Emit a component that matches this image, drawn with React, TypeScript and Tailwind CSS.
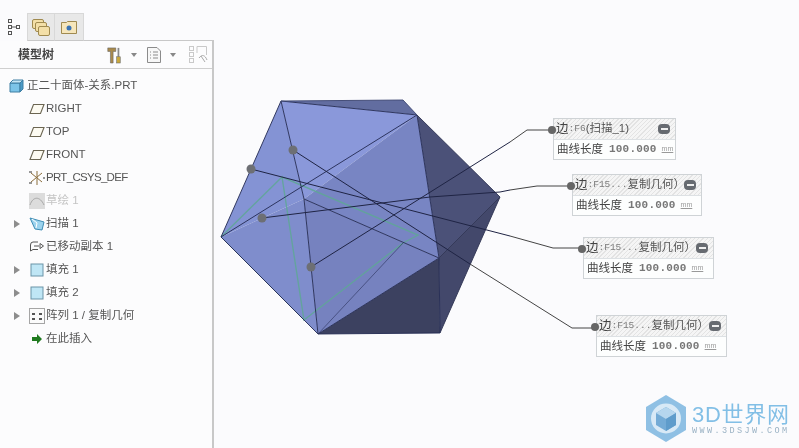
import React from "react";

const cjk = "font-['Liberation_Sans','Noto_Sans_CJK_SC',sans-serif]";

function Plane() {
  return (
    <svg width="16" height="12" viewBox="0 0 16 12">
      <path d="M4.5 1.5H15L11.5 10.5H1Z" fill="#fdfbf2" stroke="#6b6552" strokeWidth="1.1" />
    </svg>
  );
}

function Fill() {
  return (
    <svg width="16" height="16" viewBox="0 0 16 16">
      <rect x="2" y="2" width="12" height="12" fill="#bfe6f5" stroke="#6b94a8" />
    </svg>
  );
}

function Arrow() {
  return <span className="w-0 h-0 border-y-[4px] border-y-transparent border-l-[6px] border-l-[#8d8d8d]" />;
}

function Row({ icon, label, arrow, muted, tight }: { icon: React.ReactNode; label: string; arrow?: boolean; muted?: boolean; tight?: boolean }) {
  return (
    <div className="h-[23px] flex items-center">
      <div className="w-[27px] pl-[14px] flex items-center">{arrow && <Arrow />}</div>
      <div className="w-[19px] flex items-center justify-center">{icon}</div>
      <span className={`${muted ? "text-[#c4c4c4]" : "text-[#555555]"} ${tight ? "tracking-[-0.7px]" : ""} whitespace-nowrap`}>{label}</span>
    </div>
  );
}

function Callout({ pos, mono, name, widthCls }: { pos: string; mono: string; name: string; widthCls: string }) {
  return (
    <div className={`absolute ${pos} ${widthCls} border border-[#cfd3d6] bg-[#fdfefe] ${cjk}`}>
      <div className="relative h-[21px] flex items-center pl-[2px] border-b border-[#dde1e4] bg-[repeating-linear-gradient(135deg,#e3e3e3_0,#e3e3e3_1px,#f5f5f5_1px,#f5f5f5_3px)]">
        <span className="text-[12.5px] text-[#444444] whitespace-nowrap">边</span>
        <span className="text-[9.5px] text-[#7a7a7a] font-['Liberation_Mono',monospace] whitespace-nowrap">{mono}</span>
        <span className="text-[11.5px] text-[#555555] whitespace-nowrap">{name}</span>
        <span className="absolute right-[5px] top-[5px] w-[12px] h-[10px] rounded-[4px] bg-[#666a70] flex items-center justify-center">
          <span className="w-[7px] h-[2px] bg-[#eeeeee]" />
        </span>
        <span className="absolute -left-[6px] top-[7px] w-[8px] h-[8px] rounded-full bg-[#666666]" />
      </div>
      <div className="h-[19px] flex items-center pl-[3px] text-[11.5px] text-[#444444]">
        <span className="w-[47px] whitespace-nowrap">曲线长度</span>
        <span className="ml-[5px] text-[11px] font-bold text-[#777777] tracking-[0.2px] font-['Liberation_Mono',monospace] whitespace-nowrap">100.000</span>
        <span className="ml-[5px] text-[7px] text-[#999999] underline">mm</span>
      </div>
    </div>
  );
}

function Model() {
  return (
    <svg className="absolute left-0 top-0" width="799" height="448" viewBox="0 0 799 448">
      <polygon points="281,101 403,100 417,115" fill="#626da0" />
      <polygon points="417,115 500,197 439,258" fill="#4b5178" />
      <polygon points="500,197 439,258 440,333" fill="#43486b" />
      <polygon points="439,258 440,333 318,334" fill="#3c4160" />
      <polygon points="281,101 417,115 304,199" fill="#8a98da" />
      <polygon points="281,101 304,199 221,237" fill="#8493d4" />
      <polygon points="417,115 439,258 304,199" fill="#7885c3" />
      <polygon points="304,199 439,258 318,334" fill="#7682bf" />
      <polygon points="221,237 304,199 318,334" fill="#7f8dcc" />

      <g fill="none" stroke="#5fa796" strokeWidth="1.4" opacity="0.85">
        <path d="M221 237L282 177L304 320L403 243L418 235L282 177" />
        <path d="M221 237L304 320" strokeWidth="1" />
      </g>

      <g fill="none" stroke="#232a52" strokeWidth="1" opacity="0.9">
        <path d="M281 101L417 115L439 258L304 199L281 101" />
        <path d="M417 115L221 237" />
        <path d="M281 101L221 237L318 334L304 199" />
        <path d="M439 258L318 334L440 333L439 258" />
        <path d="M417 115L500 197L439 258" stroke="#2f3453" />
        <path d="M500 197L440 333" stroke="#2f3453" />
        <path d="M281 101L403 100L417 115" stroke="#3b4470" />
        <path d="M318 334L403 243" opacity="0.6" />
      </g>

      <g fill="none" stroke="#1f2444" strokeWidth="1">
        <path d="M311 267L510 142" />
        <path d="M262 218L430 197L500 192L510 190" />
        <path d="M251 169L510 236" />
        <path d="M293 150L470 264" />
      </g>
      <g fill="none" stroke="#444444" strokeWidth="1">
        <path d="M510 142L527 130L553 130" />
        <path d="M510 190L537 186L572 186" />
        <path d="M510 236L553 248L583 248" />
        <path d="M470 264L572 328L596 328" />
      </g>
      <g fill="#6d6f74">
        <circle cx="293" cy="150" r="4.5" />
        <circle cx="251" cy="169" r="4.5" />
        <circle cx="262" cy="218" r="4.5" />
        <circle cx="311" cy="267" r="4.5" />
      </g>
    </svg>
  );
}

function Logo() {
  return (
    <div className="absolute left-[645px] top-[395px] flex items-start">
      <svg width="42" height="47" viewBox="0 0 42 47">
        <polygon points="21,0 41,12 41,35 21,47 1,35 1,12" fill="#8fc0e4" />
        <circle cx="21" cy="23.5" r="15" fill="#d8e9f6" />
        <polygon points="21,12 31,18 31,30 21,36 11,30 11,18" fill="#74abd6" />
        <polygon points="21,12 31,18 21,24 11,18" fill="#b6d6ee" />
        <polygon points="21,24 31,18 31,30 21,36" fill="#5f9ccb" />
      </svg>
      <div className="ml-[5px] mt-[8px] flex flex-col">
        <span className={`text-[22px] leading-[24px] tracking-[0.7px] text-[#82bfe6] whitespace-nowrap ${cjk}`}>3D世界网</span>
        <span className="text-[8.5px] leading-[9px] tracking-[2.4px] text-[#9ab2c4] font-['Liberation_Mono',monospace] whitespace-nowrap">WWW.3DSJW.COM</span>
      </div>
    </div>
  );
}

export default function App() {
  return (
    <div className={`relative w-[799px] h-[448px] overflow-hidden bg-[#fbfbfd] flex blur-[0.45px] ${cjk}`}>
      <div className="w-[214px] h-full flex flex-col">
        <div className="h-[13px]" />
        <div className="h-[28px] flex items-end">
          <div className="w-[27px] h-[28px] flex items-center justify-center">
            <svg width="14" height="18" viewBox="0 0 14 18" fill="none" stroke="#555555">
              <rect x="1.5" y="1.5" width="3" height="3" />
              <rect x="1.5" y="7.5" width="3" height="3" />
              <rect x="1.5" y="13.5" width="3" height="3" />
              <rect x="9.5" y="7.5" width="3" height="3" />
              <path d="M5 9H9" />
            </svg>
          </div>
          <div className="w-[28px] h-[28px] bg-[#e8e8e8] border border-[#d8d8d8] border-b-[#c8c8c8] flex items-center justify-center">
            <svg width="20" height="20" viewBox="0 0 20 20" stroke="#a08a50" fill="#f3dfa8">
              <rect x="1.5" y="2.5" width="11" height="9" rx="1.5" />
              <rect x="4.5" y="5.5" width="11" height="9" rx="1.5" />
              <rect x="7.5" y="9.5" width="11" height="9" rx="1.5" />
            </svg>
          </div>
          <div className="w-[29px] h-[28px] bg-[#e8e8e8] border border-l-0 border-[#d8d8d8] border-b-[#c8c8c8] flex items-center justify-center">
            <svg width="18" height="16" viewBox="0 0 18 16" stroke="#a08a50" fill="#f6e6bb">
              <path d="M1.5 3.5V14.5H16.5V2.5H7.5L6.5 3.5Z" />
              <circle cx="9" cy="9" r="2.5" fill="#3b74b5" stroke="none" />
            </svg>
          </div>
          <div className="flex-1 h-[28px] border-b border-[#c8c8c8]" />
        </div>
        <div className="flex-1 flex flex-col border-r-[2px] border-[#c8c8c8] bg-[#fcfcfd]">
          <div className="h-[28px] flex items-center border-b border-[#cfcfcf] relative">
            <span className="ml-[18px] text-[12px] font-bold text-[#444444] whitespace-nowrap">模型树</span>
            <div className="ml-auto flex items-center">
              <svg width="16" height="20" viewBox="0 0 18 20">
                <path d="M2 2H11V6H8V19H5V6H2Z" fill="#a98a4c" stroke="#5f5f5f" strokeWidth="0.6" />
                <rect x="13" y="2" width="2" height="10" fill="#888888" />
                <rect x="12" y="12" width="4" height="7" fill="#c9a83c" stroke="#5f5f5f" strokeWidth="0.6" />
              </svg>
              <span className="ml-[9px] w-0 h-0 border-x-[3.5px] border-x-transparent border-t-[4px] border-t-[#888888]" />
              <svg className="ml-[9px]" width="16" height="18" viewBox="0 0 16 18" fill="#f7f7f7" stroke="#8b8b8b">
                <path d="M1.5 1.5H11L14.5 5V16.5H1.5Z" />
                <path d="M4 6H5M7 6H12M4 9H5M7 9H12M4 12H5M7 12H12" fill="none" />
              </svg>
              <span className="ml-[8px] w-0 h-0 border-x-[3.5px] border-x-transparent border-t-[4px] border-t-[#888888]" />
              <svg className="ml-[12px] mr-[4px]" width="20" height="19" viewBox="0 0 20 19" fill="none" stroke="#c9c9c9">
                <rect x="1.5" y="1.5" width="4" height="4" />
                <rect x="1.5" y="7.5" width="4" height="4" />
                <rect x="1.5" y="13.5" width="4" height="4" />
                <path d="M9 1.5H18.5V10M9 1.5V8" />
                <path d="M11 13C14 9 17 10 19 15M13 11L17 17" stroke="#a9a9a9" />
              </svg>
            </div>
          </div>
          <div className="pt-[6px] text-[11.5px]">
            <div className="h-[22px] flex items-center pl-[9px]">
              <svg width="16" height="14" viewBox="0 0 16 14" className="mr-[2px]">
                <path d="M1 4H11V13H1Z" fill="#7cc4e8" stroke="#3f7ea3" />
                <path d="M1 4L4 1H14L11 4Z" fill="#c4e6f6" stroke="#3f7ea3" />
                <path d="M11 4L14 1V10L11 13Z" fill="#4b9ac6" stroke="#3f7ea3" />
              </svg>
              <span className="text-[#555555] whitespace-nowrap">正二十面体-关系.PRT</span>
            </div>
            <Row icon={<Plane />} label="RIGHT" />
            <Row icon={<Plane />} label="TOP" />
            <Row icon={<Plane />} label="FRONT" />
            <Row
              tight
              label="PRT_CSYS_DEF"
              icon={
                <svg width="17" height="16" viewBox="0 0 17 16" fill="none" stroke="#8a6d3b">
                  <path d="M9 1V15M3 3L14 12M3 12L14 3" />
                  <path d="M1 2H4M1 13H4M15 8H17" stroke="#333333" />
                </svg>
              }
            />
            <Row
              muted
              label="草绘 1"
              icon={
                <svg width="16" height="16" viewBox="0 0 16 16" fill="none">
                  <rect width="16" height="16" fill="#dcdcdc" />
                  <path d="M1 12C4 3 11 3 15 12" stroke="#a8a8a8" />
                </svg>
              }
            />
            <Row
              arrow
              label="扫描 1"
              icon={
                <svg width="16" height="15" viewBox="0 0 16 15">
                  <path d="M1 2L15 6L13 14L6 13Z" fill="#9bd3ee" stroke="#3f8db5" />
                  <path d="M3 3L8 7L7 12" fill="none" stroke="#ffffff" />
                </svg>
              }
            />
            <Row
              label="已移动副本 1"
              icon={
                <svg width="16" height="14" viewBox="0 0 16 14" fill="none" stroke="#555555">
                  <path d="M9 2H4Q1.5 2 1.5 5V11L4 9.5H9" />
                  <path d="M5 6H10M11 3.5L14.5 6L11 8.5Z" />
                </svg>
              }
            />
            <Row arrow icon={<Fill />} label="填充 1" />
            <Row arrow icon={<Fill />} label="填充 2" />
            <Row
              arrow
              label="阵列 1 / 复制几何"
              icon={
                <svg width="16" height="16" viewBox="0 0 16 16">
                  <rect x="0.5" y="0.5" width="15" height="15" fill="#fbfbfb" stroke="#a5a5a5" />
                  <path d="M3 5H6V7H3ZM10 5H13V7H10ZM3 10H6V12H3ZM10 10H13V12H10Z" fill="#555555" />
                </svg>
              }
            />
            <Row
              label="在此插入"
              icon={
                <svg width="12" height="12" viewBox="0 0 12 12">
                  <path d="M1 4H6V1L11 6L6 11V8H1Z" fill="#1f7a1f" />
                </svg>
              }
            />
          </div>
        </div>
      </div>
      <Model />
      <Callout pos="left-[553px] top-[118px]" widthCls="w-[123px]" mono=":F6" name="(扫描_1)" />
      <Callout pos="left-[572px] top-[174px]" widthCls="w-[130px]" mono=":F15..." name="复制几何）" />
      <Callout pos="left-[583px] top-[237px]" widthCls="w-[131px]" mono=":F15..." name="复制几何）" />
      <Callout pos="left-[596px] top-[315px]" widthCls="w-[131px]" mono=":F15..." name="复制几何）" />
      <Logo />
    </div>
  );
}
